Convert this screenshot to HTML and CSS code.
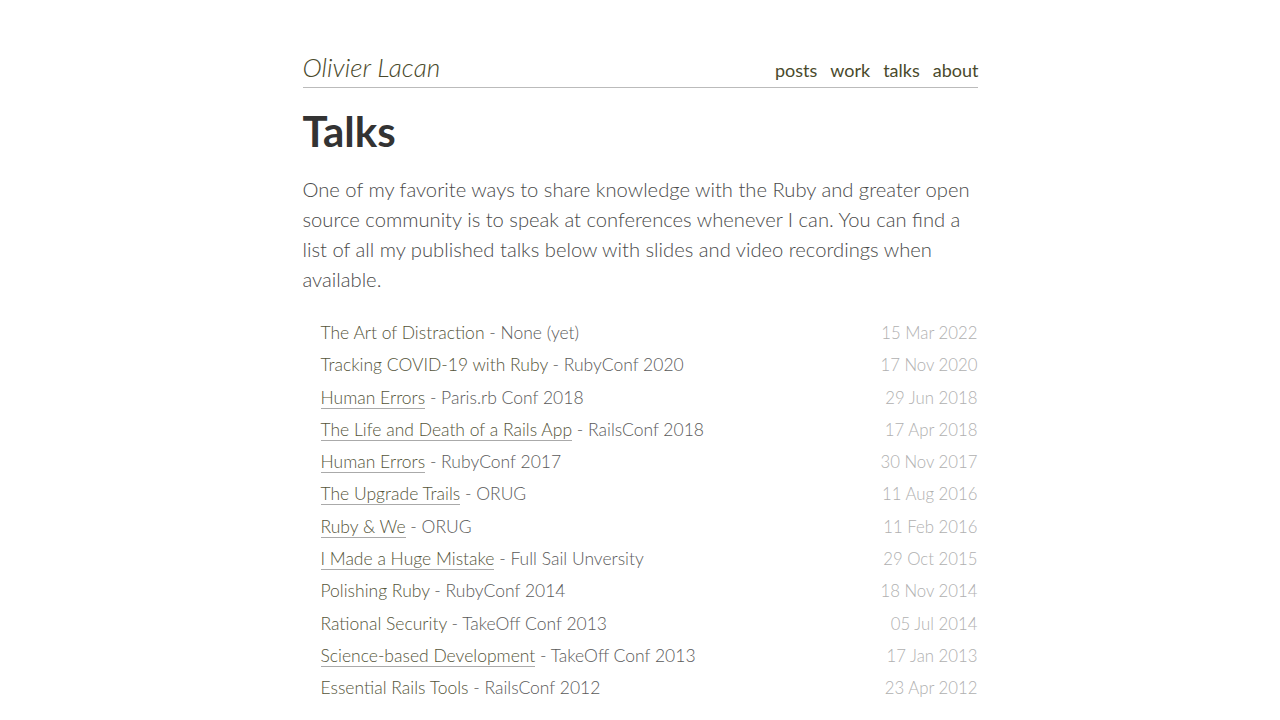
FILE: index.html
```html
<!DOCTYPE html>
<html lang="en">
<head>
<meta charset="utf-8">
<title>Talks - Olivier Lacan</title>
<link rel="stylesheet" href="styles.css">
</head>
<body>
<div class="page">
  <header class="site-header">
    <a class="site-title" href="#">Olivier Lacan</a>
    <nav class="site-nav">
      <a href="#">posts</a>
      <a href="#">work</a>
      <a href="#">talks</a>
      <a href="#">about</a>
    </nav>
  </header>
  <main>
    <h1 class="page-title">Talks</h1>
    <p class="intro">One of my favorite ways to share knowledge with the Ruby and greater open source community is to speak at conferences whenever I can. You can find a list of all my published talks below with slides and video recordings when available.</p>
    <ul class="talks">
      <li><span class="talk"><span class="name">The Art of Distraction</span> - None (yet)</span><span class="date">15 Mar 2022</span></li>
      <li><span class="talk"><span class="name">Tracking COVID-19 with Ruby</span> - RubyConf 2020</span><span class="date">17 Nov 2020</span></li>
      <li><span class="talk"><a class="name linked" href="#">Human Errors</a> - Paris.rb Conf 2018</span><span class="date">29 Jun 2018</span></li>
      <li><span class="talk"><a class="name linked" href="#">The Life and Death of a Rails App</a> - RailsConf 2018</span><span class="date">17 Apr 2018</span></li>
      <li><span class="talk"><a class="name linked" href="#">Human Errors</a> - RubyConf 2017</span><span class="date">30 Nov 2017</span></li>
      <li><span class="talk"><a class="name linked" href="#">The Upgrade Trails</a> - ORUG</span><span class="date">11 Aug 2016</span></li>
      <li><span class="talk"><a class="name linked" href="#">Ruby &amp; We</a> - ORUG</span><span class="date">11 Feb 2016</span></li>
      <li><span class="talk"><a class="name linked" href="#">I Made a Huge Mistake</a> - Full Sail Unversity</span><span class="date">29 Oct 2015</span></li>
      <li><span class="talk"><span class="name">Polishing Ruby</span> - RubyConf 2014</span><span class="date">18 Nov 2014</span></li>
      <li><span class="talk"><span class="name">Rational Security</span> - TakeOff Conf 2013</span><span class="date">05 Jul 2014</span></li>
      <li><span class="talk"><a class="name linked" href="#">Science-based Development</a> - TakeOff Conf 2013</span><span class="date">17 Jan 2013</span></li>
      <li><span class="talk"><span class="name">Essential Rails Tools</span> - RailsConf 2012</span><span class="date">23 Apr 2012</span></li>
    </ul>
  </main>
</div>
</body>
</html>
```
FILE: styles.css
```css
html, body {
  margin: 0;
  padding: 0;
  background: #fff;
}
body {
  font-family: Lato, "Open Sans", sans-serif;
  font-weight: 300;
  color: #333;
}
.page {
  width: 675px;
  margin: 0 auto;
  padding-top: 52px;
}
.site-header {
  display: flex;
  justify-content: space-between;
  align-items: flex-end;
  border-bottom: 1px solid #bbb;
  padding-bottom: 4px;
}
.site-title {
  font-size: 26.2px;
  font-style: italic;
  font-weight: 300;
  color: #4a4a2c;
  text-decoration: none;
  line-height: 30px;
  margin-bottom: 1px;
}
.site-nav {
  display: flex;
  gap: 13px;
  font-size: 18px;
  font-weight: 400;
  line-height: 22px;
  margin-right: -1px;
  padding-bottom: 2px;
}
.site-nav a {
  color: #4a4a2c;
  text-decoration: none;
}
.page-title {
  font-size: 42px;
  font-weight: 700;
  color: #333;
  margin: 21px 0 0;
  line-height: 44px;
}
.intro {
  font-size: 20.2px;
  line-height: 30px;
  margin: 21px 0 0;
  color: #4a4a4a;
}
.talks {
  list-style: none;
  margin: 23px 0 0;
  padding: 0 0 0 18px;
}
.talks li {
  display: flex;
  justify-content: space-between;
  align-items: baseline;
  font-size: 17.5px;
  line-height: 32.3px;
}
.talk {
  color: #5a5a5a;
}
.name {
  color: #55553a;
  text-decoration: none;
}
.name.linked {
  border-bottom: 1px solid #aaa;
}
.date {
  font-size: 16.8px;
  color: #b0b0b0;
}
```
